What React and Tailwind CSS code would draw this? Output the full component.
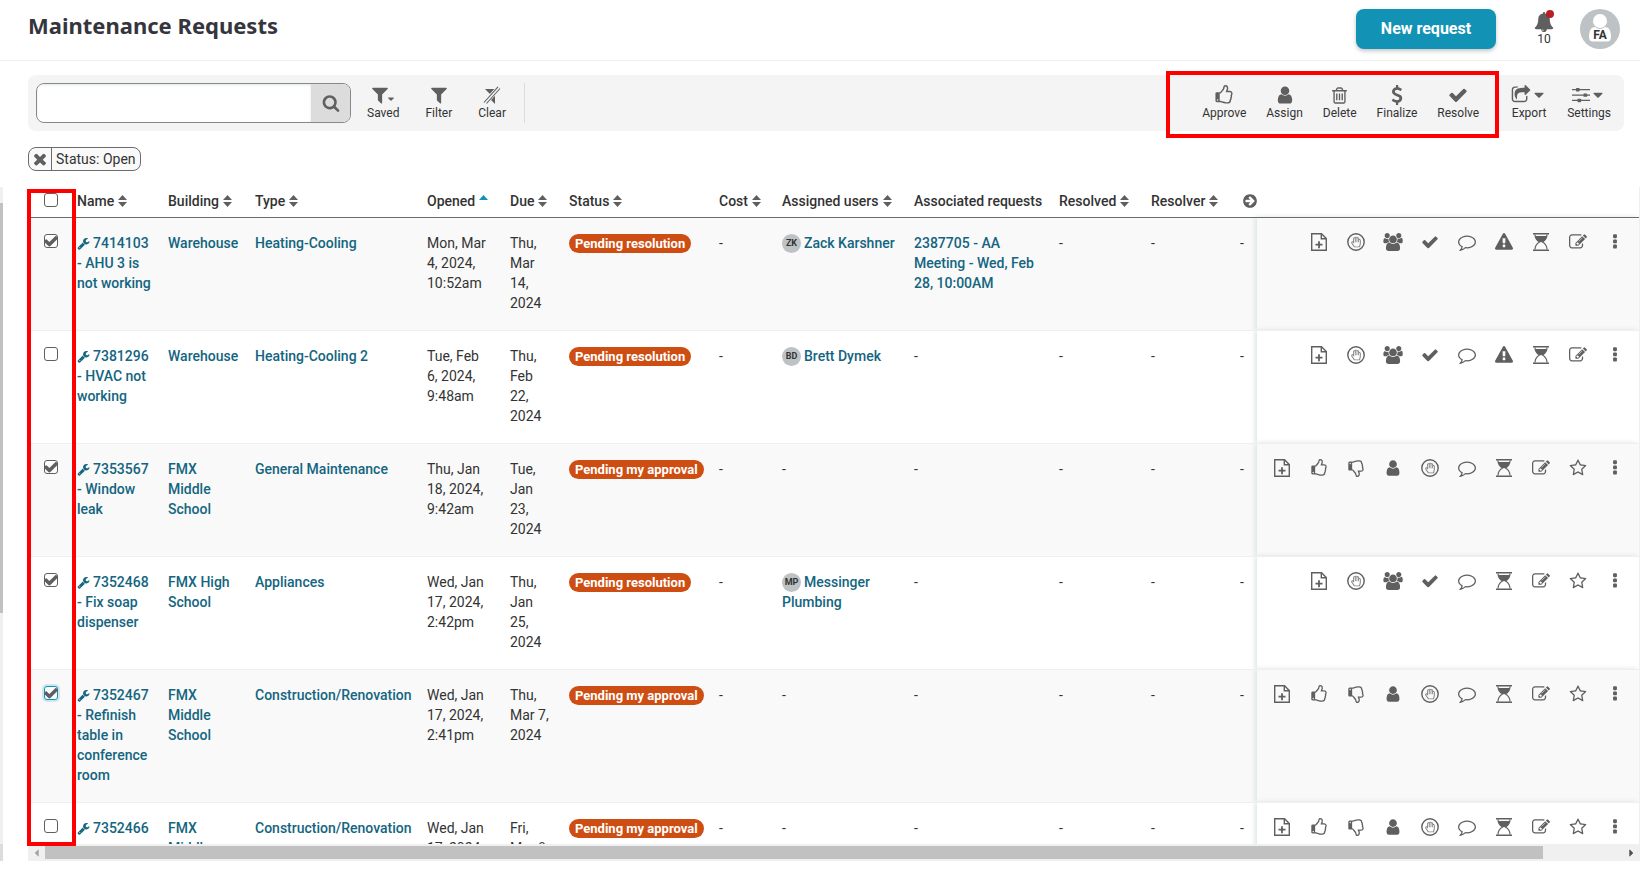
import { useState } from "react";
import { FaRegHandPaper } from "react-icons/fa";

const PATHS = {
  check: "M1671 566q0 40-28 68l-724 724-136 136q-28 28-68 28t-68-28l-136-136-362-362q-28-28-28-68t28-68l136-136q28-28 68-28t68 28l294 295 656-657q28-28 68-28t68 28l136 136q28 28 28 68z",
  user: "M1536 1399q0 109-62.5 187t-150.5 78h-854q-88 0-150.5-78t-62.5-187q0-85 8.5-160.5t31.5-152 58.5-131 94-89 134.5-34.5q131 128 313 128t313-128q76 0 134.5 34.5t94 89 58.5 131 31.5 152 8.5 160.5zm-256-887q0 159-112.5 271.5t-271.5 112.5-271.5-112.5-112.5-271.5 112.5-271.5 271.5-112.5 271.5 112.5 112.5 271.5z",
  caret: "M1408 704q0 26-19 45l-448 448q-19 19-45 19t-45-19l-448-448q-19-19-19-45t19-45 45-19h896q26 0 45 19t19 45z",
  filter: "M1595 295q17 41-14 70l-493 493v742q0 42-39 59-13 5-25 5-27 0-45-19l-256-256q-19-19-19-45v-486l-493-493q-31-29-14-70 17-39 59-39h1280q42 0 59 39z",
  search: "M1216 832q0-185-131.5-316.5t-316.5-131.5-316.5 131.5-131.5 316.5 131.5 316.5 316.5 131.5 316.5-131.5 131.5-316.5zm512 832q0 52-38 90t-90 38q-54 0-90-38l-343-342q-179 124-399 124-143 0-273.5-55.5t-225-150-150-225-55.5-273.5 55.5-273.5 150-225 225-150 273.5-55.5 273.5 55.5 225 150 150 225 55.5 273.5q0 220-124 399l343 343q37 37 37 90z",
  times: "M1490 1322q0 40-28 68l-136 136q-28 28-68 28t-68-28l-294-294-294 294q-28 28-68 28t-68-28l-136-136q-28-28-28-68t28-68l294-294-294-294q-28-28-28-68t28-68l136-136q28-28 68-28t68 28l294 294 294-294q28-28 68-28t68 28l136 136q28 28 28 68t-28 68l-294 294 294 294q28 28 28 68z",
  wrench: "M448 1472q0-26-19-45t-45-19-45 19-19 45 19 45 45 19 45-19 19-45zm644-420l-682 682q-37 37-90 37-52 0-91-37l-106-108q-38-36-38-90 0-53 38-91l681-681q39 98 114.5 173.5t173.5 114.5zm634-435q0 39-23 106-47 134-164.5 217.5t-258.5 83.5q-185 0-316.5-131.5t-131.5-316.5 131.5-316.5 316.5-131.5q58 0 121.5 16.5t107.5 46.5q16 11 16 28t-16 28l-293 169v224l193 107q5-3 79-48.5t135.5-81 70.5-35.5q15 0 23.5 10t8.5 25z",
  more: "M1088 1248v192q0 40-28 68t-68 28h-192q-40 0-68-28t-28-68v-192q0-40 28-68t68-28h192q40 0 68 28t28 68zm0-512v192q0 40-28 68t-68 28h-192q-40 0-68-28t-28-68v-192q0-40 28-68t68-28h192q40 0 68 28t28 68zm0-512v192q0 40-28 68t-68 28h-192q-40 0-68-28t-28-68v-192q0-40 28-68t68-28h192q40 0 68 28t28 68z",
  comment: "M896 384q-204 0-381.5 69.5t-282 187.5-104.5 255q0 112 71.5 213.5t201.5 175.5l87 50-27 96q-24 91-70 172 152-63 275-171l43-38 57 6q69 8 130 8 204 0 381.5-69.5t282-187.5 104.5-255-104.5-255-282-187.5-381.5-69.5zm896 512q0 174-120 321.5t-326 233-450 85.5q-70 0-145-8-198 175-460 242-49 14-114 22h-5q-15 0-27-10.5t-16-27.5v-1q-3-4-.5-12t2-10 4.5-9.5l6-9 7-8.5 8-9q7-8 31-34.5t34.5-38 31-39.5 32.5-51 27-59 26-76q-157-89-247.5-220t-90.5-281q0-174 120-321.5t326-233 450-85.5 450 85.5 326 233 120 321.5z",
  warning: "M1024 1375v-190q0-14-9.5-23.5t-22.5-9.5h-192q-13 0-22.5 9.5t-9.5 23.5v190q0 14 9.5 23.5t22.5 9.5h192q13 0 22.5-9.5t9.5-23.5zm-2-374l18-459q0-12-10-19-13-11-24-11h-220q-11 0-24 11-10 7-10 21l17 457q0 10 10 16.5t24 6.5h185q14 0 23.5-6.5t10.5-16.5zm-14-934l768 1408q35 63-2 126-17 29-46.5 46t-63.5 17h-1536q-34 0-63.5-17t-46.5-46q-37-63-2-126l768-1408q17-31 47-49t65-18 65 18 47 49z",
  star: "M1201 1004l306-297-422-62-189-382-189 382-422 62 306 297-73 421 378-199 377 199zm527-357q0 22-26 48l-363 354 86 500q1 7 1 20 0 50-41 50-19 0-40-12l-449-236-449 236q-22 12-40 12-21 0-31.5-14.5t-10.5-35.5q0-6 2-20l86-500-364-354q-25-27-25-48 0-37 56-46l502-73 225-455q19-41 49-41t49 41l225 455 502 73q56 9 56 46z",
  bell: "M912 1696q0-16-16-16-59 0-101.5-42.5t-42.5-101.5q0-16-16-16t-16 16q0 73 51.5 124.5t124.5 51.5q16 0 16-16zm816-288q0 52-38 90t-90 38h-448q0 106-75 181t-181 75-181-75-75-181h-448q-52 0-90-38t-38-90q50-42 91-88t85-119.5 74.5-158.5 50-206 19.5-260q0-152 117-282.5t307-158.5q-8-19-8-39 0-40 28-68t68-28 68 28 28 68q0 20-8 39 190 28 307 158.5t117 282.5q0 139 19.5 260t50 206 74.5 158.5 85 119.5 91 88z",
  edit: "M888 1184l116-116-152-152-116 116v56h96v96h56zm440-720q-16-16-33 1l-350 350q-17 17-1 33t33-1l350-350q17-17 1-33zm80 594v190q0 119-84.5 203.5t-203.5 84.5h-832q-119 0-203.5-84.5t-84.5-203.5v-832q0-119 84.5-203.5t203.5-84.5h832q63 0 117 25 15 7 18 23 3 17-9 29l-49 49q-14 14-32 8-23-6-45-6h-832q-66 0-113 47t-47 113v832q0 66 47 113t113 47h832q66 0 113-47t47-113v-126q0-13 9-22l64-64q15-15 35-7t20 29zm-96-738l288 288-672 672h-288v-288zm444 132l-92 92-288-288 92-92q28-28 68-28t68 28l152 152q28 28 28 68t-28 68z",
  thumb: "M384 1344q0-26-19-45t-45-19-45 19-19 45 19 45 45 19 45-19 19-45zm1152-576q0-51-39-89.5t-89-38.5h-352q0-58 48-159.5t48-160.5q0-98-32-145t-128-47q-26 26-38 85t-30.5 125.5-59.5 109.5q-22 23-77 91-4 5-23 30t-31.5 41-34.5 42.5-40 44-38.5 35.5-40 27-35.5 9h-32v640h32q13 0 31.5 3t33 6.5 38 11 35 11.5 35.5 12.5 29 10.5q211 73 342 73h121q192 0 192-167 0-26-5-56 30-16 47.5-52.5t17.5-73.5-18-69q53-50 53-119 0-25-10-55.5t-25-47.5q32-1 53.5-47t21.5-81zm128-1q0 89-49 163 9 33 9 69 0 77-38 144 3 21 3 43 0 101-60 178 1 139-85 219.5t-227 80.5h-129q-96 0-189.5-22.5t-216.5-65.5q-116-40-138-40h-288q-53 0-90.5-37.5t-37.5-90.5v-640q0-53 37.5-90.5t90.5-37.5h274q36-24 137-155 58-75 107-128 24-25 35.5-85.5t30.5-126.5 62-108q39-37 90-37 84 0 151 32.5t102 101.5 35 186q0 93-48 192h176q104 0 180 76t76 179z",
  trash: "M704 736v576q0 14-9 23t-23 9h-64q-14 0-23-9t-9-23v-576q0-14 9-23t23-9h64q14 0 23 9t9 23zm256 0v576q0 14-9 23t-23 9h-64q-14 0-23-9t-9-23v-576q0-14 9-23t23-9h64q14 0 23 9t9 23zm256 0v576q0 14-9 23t-23 9h-64q-14 0-23-9t-9-23v-576q0-14 9-23t23-9h64q14 0 23 9t9 23zm128 724v-948h-896v948q0 22 7 40.5t14.5 27 10.5 8.5h832q3 0 10.5-8.5t14.5-27 7-40.5zm-672-1076h448l-48-117q-7-9-17-11h-317q-10 2-17 11zm928 32v64q0 14-9 23t-23 9h-96v948q0 83-47 143.5t-113 60.5h-832q-66 0-113-58.5t-47-141.5v-952h-96q-14 0-23-9t-9-23v-64q0-14 9-23t23-9h309l70-167q15-37 54-63t79-26h320q40 0 79 26t54 63l70 167h309q14 0 23 9t9 23z",
  dollar: "M1362 1185q0 153-99.5 263.5t-258.5 136.5v175q0 14-9 23t-23 9h-135q-13 0-22.5-9.5t-9.5-22.5v-175q-66-9-127.5-31t-101.5-44.5-74-48-46.5-37.5-17.5-18q-17-21-2-41l103-135q7-10 23-12 15-2 24 9l2 2q113 99 243 125 37 8 74 8 81 0 142.5-43t61.5-122q0-28-15-53t-33.5-42-58.5-37.5-66-32-80-32.5q-39-16-61.5-25t-61.5-26.5-62.5-31-56.5-35.5-53.5-42.5-43.5-49-35.5-58-21-66.5-8.5-78q0-138 98-242t255-134v-180q0-13 9.5-22.5t22.5-9.5h135q14 0 23 9t9 23v176q57 6 110.5 23t87 33.5 63.5 37.5 39 29 15 14q17 18 5 38l-81 146q-8 15-23 16-14 3-27-7-3-3-14.5-12t-39-26.5-58.5-32-74.5-26-85.5-11.5q-95 0-155 43t-60 111q0 26 8.5 48t29.5 41.5 39.5 33 56 31 60.5 27 70 27.5q53 20 81 31.5t76 35 75.5 42.5 62 50 53 63.5 31.5 76.5 13 94z",
  share: "M1472 989v259q0 119-84.5 203.5t-203.5 84.5h-832q-119 0-203.5-84.5t-84.5-203.5v-832q0-119 84.5-203.5t203.5-84.5h255q13 0 22.5 9.5t9.5 22.5q0 27-26 32-77 26-133 60-10 4-16 4h-112q-66 0-113 47t-47 113v832q0 66 47 113t113 47h832q66 0 113-47t47-113v-214q0-19 18-29 28-13 54-37 16-16 35-8 21 9 21 29zm237-496l-384 384q-18 19-45 19-12 0-25-5-39-17-39-59v-192h-160q-323 0-438 131-119 137-74 473 3 23-20 34-8 2-12 2-16 0-26-13-10-14-21-31t-39.5-68.5-49.5-99.5-38.5-114-17.5-122q0-49 3.5-91t14-90 28-88 47-81.5 68.5-74 94.5-61.5 124.5-48.5 159.5-30.5 196.5-11h160v-192q0-42 39-59 13-5 25-5 26 0 45 19l384 384q19 19 19 45t-19 45z",
  next: "M1413 896q0-27-18-45l-91-91-362-362q-18-18-45-18t-45 18l-91 91q-18 18-18 45t18 45l189 189h-502q-26 0-45 19t-19 45v128q0 26 19 45t45 19h502l-189 189q-19 19-19 45t19 45l91 91q18 18 45 18t45-18l362-362 91-91q18-18 18-45zm251 0q0 209-103 385.5t-279.5 279.5-385.5 103-385.5-103-279.5-279.5-103-385.5 103-385.5 279.5-279.5 385.5-103 385.5 103 279.5 279.5 103 385.5z",
};

const USERS_PATH =
  "M593 896q-162 5-265 128h-134q-82 0-138-40.5t-56-118.5q0-353 124-353 6 0 43.5 21t97.5 42.5 119 21.5q67 0 133-23-5 37-5 66 0 159 93 290zm1071 637q0 120-73 189.5t-194 69.5h-874q-121 0-194-69.5t-73-189.5q0-53 3.5-103.5t14-109 26.5-108.5 43-97.5 62-81 85.5-53.5 111.5-20q10 0 43 21.5t73 48 107 48 135 21.5 135-21.5 107-48 73-48 43-21.5q61 0 111.5 20t85.5 53.5 62 81 43 97.5 26.5 108.5 14 109 3.5 103.5zm-1024-1277q0 106-75 181t-181 75-181-75-75-181 75-181 181-75 181 75 75 181zm704 384q0 159-112.5 271.5t-271.5 112.5-271.5-112.5-112.5-271.5 112.5-271.5 271.5-112.5 271.5 112.5 112.5 271.5zm576 225q0 78-56 118.5t-138 40.5h-134q-103-123-265-128 93-131 93-290 0-29-5-66 66 23 133 23 59 0 119-21.5t97.5-42.5 43.5-21q124 0 124 353zm-128-609q0 106-75 181t-181 75-181-75-75-181 75-181 181-75 181 75 75 181z";

function Icon({ name, className = "size-[18px]" }) {
  return (
    <svg viewBox="0 0 1792 1792" fill="currentColor" className={className} aria-hidden="true">
      <path d={PATHS[name]} />
    </svg>
  );
}

function SlidersIcon() {
  return (
    <svg viewBox="0 0 18 16" fill="currentColor" className="h-4 w-[18px]" aria-hidden="true">
      <path d="M0 2h18v1.3H0zM0 7.4h18v1.3H0zM0 12.800h18v1.3H0z" />
      <rect x="4" y="1" width="3.6" height="3.4" rx=".6" />
      <rect x="11.500" y="6.4" width="3.6" height="3.4" rx=".6" />
      <rect x="5.5" y="11.8" width="3.6" height="3.4" rx=".6" />
    </svg>
  );
}

function ClearFilterIcon() {
  return (
    <svg viewBox="0 0 18 18" className="size-[18px]" aria-hidden="true">
      <path d="M2 3h13l-3 5v10l-4-4V9z" fill="currentColor" />
      <path d="M2 17 16 1.500" stroke="#f4f4f4" strokeWidth="5" />
      <path d="M1 16.500 15 .8M3.500 17.500 17 2.500" stroke="currentColor" strokeWidth="1.100" />
    </svg>
  );
}

function FilePlusIcon() {
  return (
    <svg viewBox="0 0 16 18" fill="none" stroke="currentColor" strokeWidth="1.4" className="h-[18px] w-4" aria-hidden="true">
      <path d="M.7.7h9.800l4.800 4.800v11.800H.7zM10.300.9v4.900h4.900" />
      <path d="M8 8.200v7M4.500 11.700h7" strokeWidth="1.800" />
    </svg>
  );
}

function HandIcon() {
  return (
    <svg viewBox="0 0 18 18" className="size-[18px]" aria-hidden="true">
      <circle cx="9" cy="9" r="8.200" fill="none" stroke="currentColor" strokeWidth="1.400" />
      <FaRegHandPaper x="3.500" y="3.500" size="11" color="#858585" />
    </svg>
  );
}

function UsersIcon() {
  return (
    <svg viewBox="0 0 1920 1792" fill="currentColor" className="h-[18px] w-5" aria-hidden="true">
      <path d={USERS_PATH} />
    </svg>
  );
}

function HourglassIcon() {
  return (
    <svg viewBox="0 0 16 18" fill="none" stroke="currentColor" className="h-[18px] w-4" aria-hidden="true">
      <path d="M0 .8h16M0 17.200h16" strokeWidth="1.500" />
      <path d="M2 1.500c0 4.500 2 6 4.600 7.500C4 10.500 2 12 2 16.500M14 1.500c0 4.500-2 6-4.600 7.500 2.600 1.500 4.600 3 4.600 7.500" strokeWidth="1.200" />
      <path d="M2.300 3h11.400c-.4 3-2 4.700-4.400 6H6.700C4.300 7.700 2.700 6 2.300 3z" fill="currentColor" stroke="none" />
    </svg>
  );
}

const actionIcons = {
  "Add file": <FilePlusIcon />,
  "Put on hold": <HandIcon />,
  "Assign users": <UsersIcon />,
  Assign: <Icon name="user" />,
  Resolve: <Icon name="check" />,
  Approve: <Icon name="thumb" />,
  Decline: <Icon name="thumb" className="size-[18px] -scale-y-100" />,
  Respond: <Icon name="comment" />,
  Escalate: <Icon name="warning" />,
  "Log time": <HourglassIcon />,
  Edit: <Icon name="edit" />,
  Follow: <Icon name="star" />,
  More: <Icon name="more" />,
};

const openActions = ["Add file", "Put on hold", "Assign users", "Resolve", "Respond", "Escalate", "Log time", "Edit", "More"];
const approvalActions = ["Add file", "Approve", "Decline", "Assign", "Put on hold", "Respond", "Log time", "Edit", "Follow", "More"];
const assignedActions = ["Add file", "Put on hold", "Assign users", "Resolve", "Respond", "Log time", "Edit", "Follow", "More"];

const requests = [
  {
    id: "7414103", name: "AHU 3 is not working", building: "Warehouse", type: "Heating-Cooling",
    opened: "Mon, Mar 4, 2024, 10:52am", due: "Thu, Mar 14, 2024", status: "Pending resolution",
    user: ["ZK", "Zack Karshner"], associated: "2387705 - AA Meeting - Wed, Feb 28, 10:00AM", actions: openActions,
  },
  {
    id: "7381296", name: "HVAC not working", building: "Warehouse", type: "Heating-Cooling 2",
    opened: "Tue, Feb 6, 2024, 9:48am", due: "Thu, Feb 22, 2024", status: "Pending resolution",
    user: ["BD", "Brett Dymek"], actions: openActions,
  },
  {
    id: "7353567", name: "Window leak", building: "FMX Middle School", type: "General Maintenance",
    opened: "Thu, Jan 18, 2024, 9:42am", due: "Tue, Jan 23, 2024", status: "Pending my approval",
    actions: approvalActions,
  },
  {
    id: "7352468", name: "Fix soap dispenser", building: "FMX High School", type: "Appliances",
    opened: "Wed, Jan 17, 2024, 2:42pm", due: "Thu, Jan 25, 2024", status: "Pending resolution",
    user: ["MP", "Messinger Plumbing"], actions: assignedActions,
  },
  {
    id: "7352467", name: "Refinish table in conference room", building: "FMX Middle School", type: "Construction/Renovation",
    opened: "Wed, Jan 17, 2024, 2:41pm", due: "Thu, Mar 7, 2024", status: "Pending my approval",
    actions: approvalActions,
  },
  {
    id: "7352466", name: "new screens", building: "FMX Middle School", type: "Construction/Renovation",
    opened: "Wed, Jan 17, 2024, 2:40pm", due: "Fri, Mar 8, 2024", status: "Pending my approval",
    actions: approvalActions,
  },
];

const columns = ["Name", "Building", "Type", "Opened", "Due", "Status", "Cost", "Assigned users", "Associated requests", "Resolved", "Resolver"];

function ToolButton({ label, children }) {
  return (
    <button className="flex flex-col items-center text-xs leading-4 text-[#333]">
      <span className="flex h-5 items-center text-[#5f5f5f]">{children}</span>
      {label}
    </button>
  );
}

function SortArrows({ active }) {
  return (
    <svg viewBox="0 0 9 12" className="h-3 w-[9px]" aria-hidden="true">
      <path d="M4.500 0 9 5H0z" fill={active ? "#1292b5" : "#5f5f5f"} />
      {!active && <path d="M4.500 12 0 7h9z" fill="#5f5f5f" />}
    </svg>
  );
}

function Checkbox({ label, checked, focused, onChange }) {
  return (
    <span className="relative ml-4 flex size-[14px]">
      <input
        type="checkbox"
        aria-label={label}
        checked={checked}
        onChange={onChange}
        className={`size-[14px] appearance-none rounded-[3px] border bg-white ${focused ? "border-[#1292b5] ring-2 ring-[#cfe6ee]" : "border-[#5f5f5f]"}`}
      />
      {checked && <Icon name="check" className="pointer-events-none absolute -inset-px size-4 text-[#5f5f5f]" />}
    </span>
  );
}

function RequestLink({ children }) {
  return <a href="#" className="font-medium text-[#136580]">{children}</a>;
}

function RequestRow({ request, checked, focused, onToggle }) {
  const cell = "pt-[15px] pr-4 pb-[17px]";

  return (
    <tr className="border-t border-[#efefef] bg-white align-top odd:bg-[#f9f9f9]">
      <td className="pt-4"><Checkbox label={`Select ${request.id}`} checked={checked} focused={focused} onChange={onToggle} /></td>
      <td className={cell}>
        <RequestLink>
          <Icon name="wrench" className="mr-[3px] inline-block size-[13px] align-[-2px]" />
          {request.id} - {request.name}
        </RequestLink>
      </td>
      <td className={cell}><RequestLink>{request.building}</RequestLink></td>
      <td className={cell}><RequestLink>{request.type}</RequestLink></td>
      <td className="pt-[15px] pr-5 pb-[17px]">{request.opened}</td>
      <td className={cell}>{request.due}</td>
      <td className="pt-[15px]">
        <span className="inline-block rounded-full bg-[#ce4d12] px-[6px] text-[13px] leading-[19px] font-bold whitespace-nowrap text-white">{request.status}</span>
      </td>
      <td className={cell}>-</td>
      <td className="pt-[15px] pr-3 pb-[17px]">
        {request.user ? (
          <RequestLink>
            <span className="mr-[3px] inline-flex size-[19px] items-center justify-center rounded-full bg-[#bdc2c5] align-middle text-[9px] leading-none font-bold text-[#333]">
              {request.user[0]}
            </span>
            {request.user[1]}
          </RequestLink>
        ) : "-"}
      </td>
      <td className={cell}>{request.associated ? <RequestLink>{request.associated}</RequestLink> : "-"}</td>
      <td className={cell}>-</td>
      <td className={cell}>-</td>
      <td className="pt-[15px]">-</td>
      <td className="bg-inherit pt-3 pr-[6px] shadow-[-2px_0_5px_#dde4e6]">
        <div className="flex justify-end">
          {request.actions.map((action) => (
            <button key={action} aria-label={action} className="flex h-6 w-[37px] items-center justify-center text-[#5f5f5f]">
              {actionIcons[action]}
            </button>
          ))}
        </div>
      </td>
    </tr>
  );
}

export default function App() {
  const [selected, setSelected] = useState(["7414103", "7353567", "7352468", "7352467"]);

  const toggle = (id) => {
    setSelected(selected.includes(id) ? selected.filter((s) => s !== id) : [...selected, id]);
  };

  const toggleAll = () => {
    setSelected(selected.length === requests.length ? [] : requests.map((r) => r.id));
  };

  return (
    <div className="flex h-screen flex-col overflow-hidden bg-white font-[Roboto,sans-serif] text-sm text-[#333]">
      <header className="flex h-[61px] shrink-0 items-start justify-between border-b border-[#efefef] pt-[9px] pr-5 pl-7">
        <h1 className="font-['Noto_Sans',sans-serif] text-[22px] leading-8 font-bold text-[#35353d]">Maintenance Requests</h1>
        <div className="flex items-start">
          <button className="h-10 w-[140px] rounded-lg bg-[#1292b5] text-base font-bold text-white shadow-[0_2px_4px_#c4c4c4]">New request</button>
          <button aria-label="Notifications" className="relative ml-[38px] flex w-5 flex-col items-center pt-[3px] text-xs leading-[14px]">
            <Icon name="bell" className="size-5 text-[#5f5f5f]" />
            10
            <span className="absolute top-[1px] right-0 size-2 rounded-full bg-[#b81d24]" />
          </button>
          <button className="relative ml-[26px] size-10 overflow-hidden rounded-full bg-[#bdc2c5]" aria-label="Account">
            <svg viewBox="0 0 40 40" className="size-10" fill="#fff" aria-hidden="true">
              <circle cx="20" cy="12" r="7" />
              <path d="M9 28c0-6 2-10 6-10 3 2.600 7 2.600 10 0 4 0 6 4 6 10 0 3-1.500 4.500-4 4.500H13c-2.500 0-4-1.500-4-4.500z" />
            </svg>
            <span className="absolute inset-x-0 top-5 text-xs leading-3 font-bold">FA</span>
          </button>
        </div>
      </header>

      <div className="mt-[14px] mr-4 ml-7 flex h-14 shrink-0 items-center rounded-lg bg-[#f4f4f4] pr-[13px] pl-2">
        <form role="search" className="flex h-10 w-[315px] overflow-hidden rounded-lg border border-[#85898b] bg-white">
          <input type="text" aria-label="Search" className="min-w-0 flex-1 px-3 shadow-[inset_0_1px_3px_#dfe5e7] outline-none" />
          <button type="button" aria-label="Search" className="grid w-[39px] place-items-center bg-[#dcdcdc] text-[#5f5f5f]">
            <Icon name="search" />
          </button>
        </form>
        <div className="ml-4 flex h-10 items-center gap-[26px] border-r border-[#dcdcdc] pr-[18px]">
          <ToolButton label="Saved">
            <Icon name="filter" className="-mr-1 size-5" />
            <Icon name="caret" className="mt-2 size-[10px]" />
          </ToolButton>
          <ToolButton label="Filter"><Icon name="filter" className="size-5" /></ToolButton>
          <ToolButton label="Clear"><ClearFilterIcon /></ToolButton>
        </div>
        <div className="relative mr-8 ml-auto flex gap-5">
          <ToolButton label="Approve"><Icon name="thumb" className="size-5" /></ToolButton>
          <ToolButton label="Assign"><Icon name="user" className="size-5" /></ToolButton>
          <ToolButton label="Delete"><Icon name="trash" className="size-[19px]" /></ToolButton>
          <ToolButton label="Finalize"><Icon name="dollar" className="size-5" /></ToolButton>
          <ToolButton label="Resolve"><Icon name="check" className="size-5" /></ToolButton>
          <div className="pointer-events-none absolute -top-[14px] -right-5 -bottom-[17px] -left-9 border-4 border-[#f00]" />
        </div>
        <div className="flex gap-5">
          <ToolButton label="Export">
            <Icon name="share" className="size-5" />
            <Icon name="caret" className="size-4" />
          </ToolButton>
          <ToolButton label="Settings">
            <SlidersIcon />
            <Icon name="caret" className="size-4" />
          </ToolButton>
        </div>
      </div>

      <div className="mt-4 ml-7 flex h-6 w-fit shrink-0 items-center rounded-lg border border-[#6b6b6b] bg-[#f9f9f9]">
        <button aria-label="Remove filter" className="grid h-full w-[23px] place-items-center border-r border-[#6b6b6b] text-[#5f5f5f]">
          <Icon name="times" className="size-[18px]" />
        </button>
        <span className="px-1">Status: Open</span>
      </div>

      <div className="mt-4 mb-2 flex min-h-0 flex-1">
        <div className="flex w-[3px] flex-col bg-[#f0f0f0] pt-4">
          <div className="h-[410px] bg-[#c1c1c1]" />
          <div className="mt-auto h-[17px] bg-[#dcdcdc]" />
        </div>
        <main className="relative ml-[25px] flex min-w-0 flex-1 flex-col border-r border-[#efefef]">
          <div className="min-h-0 flex-1 overflow-hidden">
            <table className="w-full min-w-[1500px] table-fixed border-collapse text-left leading-5">
              <colgroup>
                <col className="w-[49px]" />
                <col className="w-[91px]" />
                <col className="w-[87px]" />
                <col className="w-[172px]" />
                <col className="w-[83px]" />
                <col className="w-[59px]" />
                <col className="w-[150px]" />
                <col className="w-[63px]" />
                <col className="w-[132px]" />
                <col className="w-[145px]" />
                <col className="w-[92px]" />
                <col className="w-[89px]" />
                <col className="w-[17px]" />
                <col />
              </colgroup>
              <thead>
                <tr className="h-[30px] border-b border-[#6b6b6b]">
                  <th className="pb-1"><Checkbox label="Select all" checked={selected.length === requests.length} onChange={toggleAll} /></th>
                  {columns.map((column) => (
                    <th key={column} className="pb-[2px] font-medium">
                      <span className="flex items-center gap-1 whitespace-nowrap">
                        {column}
                        {column !== "Associated requests" && <SortArrows active={column === "Opened"} />}
                      </span>
                    </th>
                  ))}
                  <th colSpan={2} className="pb-[2px]">
                    <button aria-label="Scroll columns right" className="ml-[2px] flex text-[#5f5f5f]"><Icon name="next" className="size-4" /></button>
                  </th>
                </tr>
              </thead>
              <tbody>
                {requests.map((request) => (
                  <RequestRow
                    key={request.id}
                    request={request}
                    checked={selected.includes(request.id)}
                    focused={request.id === "7352467"}
                    onToggle={() => toggle(request.id)}
                  />
                ))}
              </tbody>
            </table>
          </div>
          <div className="flex h-[17px] shrink-0 items-center bg-[#f0f0f0]">
            <button aria-label="Scroll left" className="grid w-[17px] place-items-center text-[#a3a3a3]">
              <Icon name="caret" className="size-3 rotate-90" />
            </button>
            <div className="flex flex-1">
              <div className="h-[13px] w-[95%] bg-[#c1c1c1]" />
            </div>
            <button aria-label="Scroll right" className="grid w-[17px] place-items-center text-[#505050]">
              <Icon name="caret" className="size-3 -rotate-90" />
            </button>
          </div>
          <div className="pointer-events-none absolute top-[2px] bottom-[15px] -left-px w-[49px] border-4 border-[#f00]" />
        </main>
      </div>
    </div>
  );
}
